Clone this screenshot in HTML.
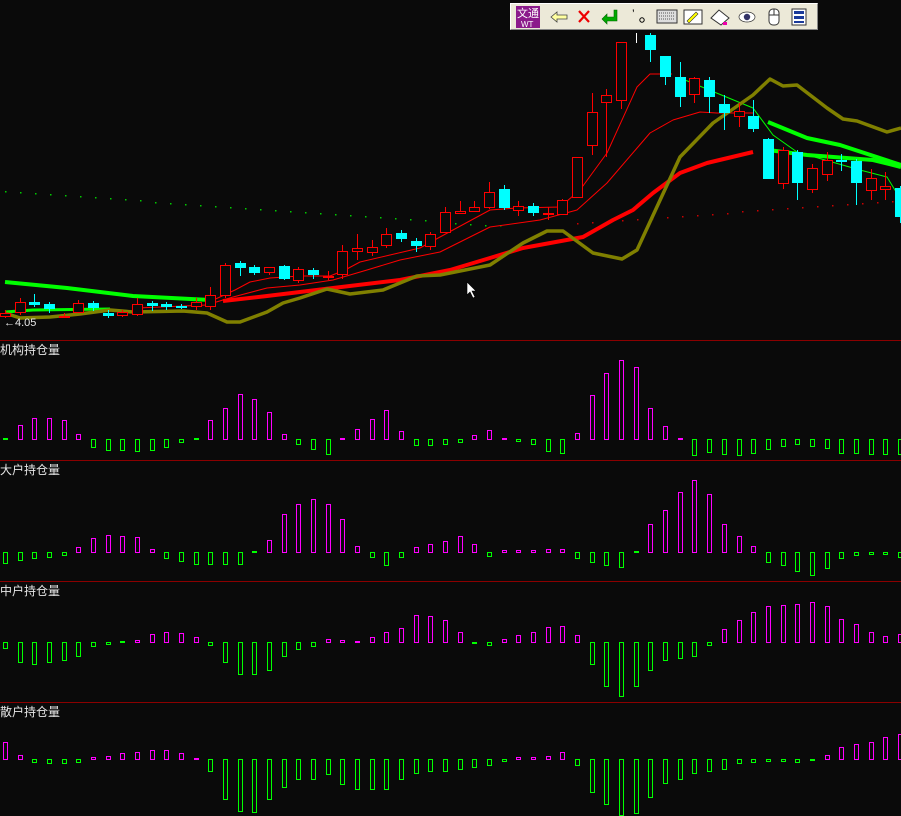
<!DOCTYPE html>
<html><head><meta charset="utf-8"><style>
html,body{margin:0;padding:0;background:#0a0a0a;width:901px;height:816px;overflow:hidden}
svg{display:block}
.lb{font-family:"Liberation Sans","WenQuanYi Zen Hei","Noto Sans CJK SC",sans-serif;font-size:12px;fill:#e8e8e8}
#tb{position:absolute;left:510px;top:3px;width:308px;height:27px;background:#ece9d8;border:1px solid #fff;border-right-color:#888;border-bottom-color:#888;box-sizing:border-box}
</style></head><body>
<svg id="s" width="901" height="816" xmlns="http://www.w3.org/2000/svg"></svg>
<div id="tb"><svg width="306" height="25">
<rect x="5" y="2" width="24" height="22" fill="#8b1a8b"/>
<text x="6" y="13" font-size="11" fill="#fff" font-family="WenQuanYi Zen Hei,sans-serif">文通</text>
<text x="10" y="23" font-size="8" fill="#fff" font-family="Liberation Sans,sans-serif">WT</text>
<path d="M40 13 l6 -5 v3 h10 v4 h-10 v3z" fill="#ffffa0" stroke="#444" stroke-width="0.8"/>
<path d="M68 7 l10 11 M78 7 l-10 11" stroke="#e00" stroke-width="2.2"/>
<path d="M103 6 v7 h-7 v-3 l-5 5 l5 5 v-3 h10 v-11z" fill="#0a0" stroke="#060" stroke-width="0.6"/>
<text x="121" y="14" font-size="12" fill="#000" font-family="Liberation Sans">’</text><circle cx="131" cy="16" r="2.2" fill="none" stroke="#000"/>
<rect x="146" y="6" width="20" height="13" fill="#ddd" stroke="#333"/><path d="M148 9h16M148 12h16M148 15h16" stroke="#555" stroke-dasharray="1 1"/>
<rect x="173" y="6" width="18" height="14" fill="#fff" stroke="#333"/><path d="M176 17 l9 -9 l2 2 l-9 9z" fill="#ff0" stroke="#333" stroke-width="0.6"/>
<path d="M200 14 l8 -8 l10 8 l-8 7z" fill="#fff" stroke="#333"/><rect x="212" y="18" width="4" height="3" fill="#e0a"/>
<ellipse cx="236" cy="13" rx="8" ry="5" fill="#fff" stroke="#333" stroke-width="0.7"/><circle cx="236" cy="13" r="3.2" fill="#336"/>
<rect x="258" y="5" width="10" height="16" rx="4" fill="#fff" stroke="#333"/><path d="M258 11h10M263 5v6" stroke="#333"/>
<rect x="281" y="5" width="14" height="16" fill="#fff" stroke="#333"/><rect x="283" y="7" width="10" height="3" fill="#1a3a9a"/><rect x="283" y="12" width="10" height="3" fill="#1a3a9a"/><rect x="283" y="17" width="10" height="2" fill="#1a3a9a"/>
</svg></div>
<script>
(function(){
var S=[];
function X(i){return 5+14.67*i}
[340,460,581,702].forEach(function(y){S.push('<line x1="0" y1="'+(y+.5)+'" x2="901" y2="'+(y+.5)+'" stroke="#8b0000"/>')});
for(var x=5;x<=500;x+=15){var y=191+(x-5)*0.07; if(y>225)y=225;S.push('<rect x="'+x+'" y="'+y.toFixed(0)+'" width="1.5" height="1.5" fill="#0c0"/>')}
for(var x=577;x<=901;x+=15){var y=223-(x-577)*0.07;if(y<200)y=200;S.push('<rect x="'+x+'" y="'+y.toFixed(0)+'" width="1.5" height="1.5" fill="#c00"/>')}
function pl(p,c,w){S.push('<polyline fill="none" stroke="'+c+'" stroke-width="'+w+'" stroke-linejoin="round" points="'+p+'"/>')}
pl("5,282 67,288 133,296 210,300","#00ff00",4);
pl("5,312 33,310 110,309","#00ff00",3);
pl("137,308 207,305","#ff0000",1);
pl("768,122 807,138 840,145 901,165","#00ff00",4);
pl("768,150 807,155 873,160 901,167","#00ff00",4);
pl("685,80 753,108 773,135 797,152 860,170 887,177 901,200","#00ff00",1);
pl("223,301 267,296 333,288 400,280 450,270 490,258 523,248 583,237 613,220 633,210 653,193 680,173 707,163 753,152","#ff0000",4);
pl("207,303 235,290 250,282 270,278 300,276 330,276 345,270 360,262 390,255 420,248 440,237 490,210 517,208 560,207 580,190 607,153 637,87 650,74 672,74","#ff0000",1);
pl("213,303 233,297 267,288 300,285 333,280 367,270 400,260 440,252 490,227 540,220 577,210 607,183 650,133 673,120 700,112 717,113 753,113","#ff0000",1);
pl("5,313 20,318 50,317 80,314 110,310 133,312 183,311 207,313 227,322 240,322 267,312 283,303 300,298 327,289 350,294 383,290 417,276 440,275 490,265 523,243 547,231 563,231 593,253 622,259 637,250 680,157 713,123 753,95 770,79 783,86 797,85 827,108 843,119 857,121 887,132 901,128","#808000",3.5);
var C=[["r",313,316,310,318],["r",302,312,298,315],["c",302,305,294,307],["c",304,309,302,313],["r",316,317,313,318],["r",303,312,300,313],["c",303,308,301,311],["c",313,316,310,318],["r",312,315,310,317],["r",304,314,298,316],["c",303,306,301,311],["c",304,307,302,310],["c",306,308,304,309],["r",302,306,298,310],["r",295,306,287,310],["r",265,295,263,298],["c",263,268,261,276],["c",267,273,265,275],["r",267,272,267,275],["c",266,279,265,280],["r",269,280,267,283],["c",270,275,268,279],["r",276,277,271,280],["r",251,274,245,279],["r",248,251,234,260],["r",247,252,240,256],["r",234,245,228,248],["c",233,239,230,242],["c",241,246,238,252],["r",234,246,232,250],["r",212,232,207,232],["r",211,213,201,213],["r",207,211,201,212],["r",192,207,182,209],["c",189,208,185,210],["r",206,210,201,216],["c",206,213,203,216],["r",213,214,207,220],["r",200,214,199,214],["r",157,197,157,197],["r",112,145,93,155],["r",95,102,89,157],["r",42,100,42,109],["w",33,43,33,43],["c",35,50,33,62],["c",56,77,56,85],["c",77,97,62,107],["r",78,94,77,103],["c",80,97,77,113],["c",104,113,95,130],["r",111,116,103,127],["c",116,129,100,132],["c",139,179,138,179],["r",150,183,147,189],["c",152,183,150,200],["r",168,189,164,193],["r",160,174,152,181],["c",160,162,154,171],["c",161,183,159,205],["r",178,190,169,200],["r",186,189,172,200],["c",188,217,186,223]];
C.forEach(function(k,i){var x=Math.round(X(i)),t=k[0];
 if(t=="w"){S.push('<line x1="'+(x+.5)+'" y1="33" x2="'+(x+.5)+'" y2="43" stroke="#fff"/>');return}
 var col=t=="r"?"#ff0000":"#00ffff";
 S.push('<line x1="'+(x+.5)+'" y1="'+k[3]+'" x2="'+(x+.5)+'" y2="'+k[4]+'" stroke="'+col+'"/>');
 if(t=="r")S.push('<rect x="'+(x-4.5)+'" y="'+(k[1]+.5)+'" width="10" height="'+Math.max(1,k[2]-k[1])+'" fill="#0a0a0a" stroke="'+col+'"/>');
 else S.push('<rect x="'+(x-5)+'" y="'+k[1]+'" width="11" height="'+Math.max(1,k[2]-k[1])+'" fill="'+col+'"/>');
});
S.push('<text x="4" y="326" class="lb" style="font-size:11px">←4.05</text>');
S.push('<path d="M467 282 v13 l3 -3 l3 6 l2 -1 l-3 -6 h4z" fill="#fff" stroke="#000" stroke-width="0.6"/>');
var P=[[439,"机构持仓量",[0,14,21,21,19,5,-8,-11,-11,-12,-11,-8,-3,0,19,31,45,40,27,5,-5,-10,-15,0,10,20,29,8,-6,-6,-5,-3,4,9,0,-2,-5,-12,-14,6,44,66,79,72,31,13,0,-16,-13,-15,-16,-14,-10,-7,-5,-7,-9,-14,-14,-15,-15,-15],[0,13]],
[552,"大户持仓量",[-11,-8,-6,-5,-3,5,14,17,16,15,3,-6,-9,-12,-12,-12,-12,0,12,38,48,53,48,33,6,-5,-13,-5,5,8,11,16,8,-4,2,2,2,3,3,-6,-10,-13,-15,0,28,42,60,72,58,28,16,6,-10,-13,-19,-23,-16,-6,-3,-2,-2,-5],[17,43]],
[642,"中户持仓量",[-6,-20,-22,-20,-18,-14,-4,-2,0,2,8,10,9,5,-3,-20,-32,-32,-28,-14,-7,-4,3,2,0,5,10,14,27,26,22,10,-1,-3,3,7,10,15,16,7,-22,-44,-54,-44,-28,-18,-16,-14,-3,13,22,30,36,37,38,40,36,23,18,10,6,8],[8]],
[759,"散户持仓量",[17,4,-3,-4,-4,-3,2,3,6,7,9,9,6,1,-12,-40,-52,-53,-40,-28,-20,-20,-15,-25,-30,-30,-30,-20,-14,-12,-12,-10,-8,-6,-2,2,2,3,7,-6,-33,-45,-56,-54,-38,-24,-20,-14,-12,-10,-4,-3,-2,-2,-3,-1,4,12,15,17,22,25],[5]]];
var tops=[341,461,582,703];
P.forEach(function(p,j){
 S.push('<text x="0" y="'+(tops[j]+13)+'" class="lb">'+p[1]+'</text>');
 var b=p[0];
 p[2].forEach(function(v,i){var x=Math.round(X(i))-2;
  if(v==0){var gz=(p[3].indexOf(i)>=0)?"#00ff00":"#ff00ff";S.push('<rect x="'+x+'" y="'+(b-1)+'" width="5" height="2" fill="'+gz+'"/>');return}
  var c=v>0?"#ff00ff":"#00ff00",y=v>0?b-v:b,h=Math.abs(v);
  S.push('<rect x="'+(x+.5)+'" y="'+(y+.5)+'" width="4" height="'+h+'" fill="none" stroke="'+c+'"/>');
 });
});
document.getElementById('s').innerHTML=S.join('');
})();
</script>
</body></html>
